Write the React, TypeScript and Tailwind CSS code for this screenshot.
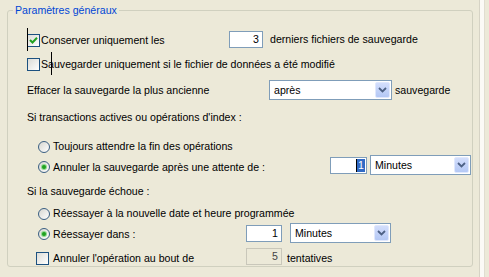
import React from 'react';

const CheckBox: React.FC<{ checked?: boolean }> = ({ checked }) => (
  <span className="flex h-[13px] w-[13px] shrink-0 items-center justify-center border border-[#1c5180] bg-gradient-to-br from-[#dcdcd7] to-white">
    {checked && (
      <svg width="9" height="9" viewBox="0 0 9 9">
        <path d="M1 4 L3.5 6.5 L8 1.8" stroke="#21a121" strokeWidth="2" fill="none" />
      </svg>
    )}
  </span>
);

const Radio: React.FC<{ checked?: boolean }> = ({ checked }) => (
  <span className="flex h-[12px] w-[12px] shrink-0 items-center justify-center rounded-full border border-[#3b5f82] bg-gradient-to-br from-[#d6d6d0] to-white">
    {checked && <span className="h-[4px] w-[4px] rounded-full bg-[#21a121] ring-1 ring-[#8fd98f]" />}
  </span>
);

const Select: React.FC<{ value: string; className: string }> = ({ value, className }) => (
  <div className={`flex h-[20px] shrink-0 items-stretch border border-[#7f9db9] bg-white ${className}`}>
    <span className="flex flex-1 items-center pl-[4px]">{value}</span>
    <span className="m-[1px] flex w-[15px] items-center justify-center rounded-[2px] border border-[#e0e8fd] bg-gradient-to-b from-[#d3defc] to-[#b4c8f5]">
      <svg width="9" height="6" viewBox="0 0 9 6">
        <path d="M1 1 L4.5 4.5 L8 1" stroke="#4d6185" strokeWidth="1.8" fill="none" />
      </svg>
    </span>
  </div>
);

export default function App() {
  return (
    <div className="flex h-[277px] w-[489px] bg-[#ece9d8] font-['Liberation_Sans',Arial,sans-serif] text-[10.6px] leading-[13px] text-black">
      <div className="relative ml-[7px] mt-[10px] h-[257px] w-[466px] shrink-0 rounded-[3px] border border-[#d0d0bf]">
        <span className="absolute left-[5px] top-[-7px] bg-[#ece9d8] px-[2px] text-[#0046d5]">Paramètres généraux</span>

        {/* traits de curseur */}
        <span className="absolute left-[19px] top-[17px] h-[23px] w-[1px] bg-black" />
        <span className="absolute left-[43px] top-[41px] h-[23px] w-[1px] bg-black" />

        <div className="flex flex-col pl-[19px] pt-[19px]">
          {/* Conserver */}
          <div className="flex h-[18px] items-center">
            <label className="mt-[2px] flex w-[202px] items-center gap-[1px]">
              <CheckBox checked />
              <span>Conserver uniquement les</span>
            </label>
            <div className="flex h-[17px] w-[34px] items-center justify-end border border-[#7f9db9] bg-white pr-[3px]">3</div>
            <span className="ml-[7px]">derniers fichiers de sauvegarde</span>
          </div>

          <div className="mt-[8px] flex h-[17px] items-center">
            <label className="flex items-center gap-[1px]">
              <CheckBox />
              <span>Sauvegarder uniquement si le fichier de données a été modifié</span>
            </label>
          </div>

          <div className="mt-[7px] flex h-[20px] items-center">
            <span className="w-[242px]">Effacer la sauvegarde la plus ancienne</span>
            <Select value="après" className="w-[123px]" />
            <span className="ml-[3px]">sauvegarde</span>
          </div>

          <div className="mt-[10px] flex h-[14px] items-center">Si transactions actives ou opérations d'index :</div>

          <div className="mt-[15px] flex h-[15px] items-center pl-[11px]">
            <label className="flex items-center gap-[3px]">
              <Radio />
              <span>Toujours attendre la fin des opérations</span>
            </label>
          </div>

          <div className="mt-[1px] flex h-[20px] items-center pl-[11px]">
            <label className="mt-[4px] flex w-[292px] items-center gap-[3px]">
              <Radio checked />
              <span>Annuler la sauvegarde après une attente de :</span>
            </label>
            <div className="flex h-[17px] w-[37px] shrink-0 items-center justify-end border border-[#7f9db9] bg-white pr-[1px]">
              <span className="border-l border-black bg-[#316ac5] px-[1px] text-white">1</span>
            </div>
            <Select value="Minutes" className="ml-[3px] w-[101px]" />
          </div>

          <div className="mt-[9px] flex h-[14px] items-center">Si la sauvegarde échoue :</div>

          <div className="mt-[8px] flex h-[15px] items-center pl-[11px]">
            <label className="flex items-center gap-[3px]">
              <Radio />
              <span>Réessayer à la nouvelle date et heure programmée</span>
            </label>
          </div>

          <div className="mt-[2px] flex h-[20px] items-center pl-[11px]">
            <label className="mt-[2px] flex w-[208px] items-center gap-[3px]">
              <Radio checked />
              <span>Réessayer dans :</span>
            </label>
            <div className="flex h-[17px] w-[36px] shrink-0 items-center justify-end border border-[#7f9db9] bg-white pr-[3px]">1</div>
            <Select value="Minutes" className="ml-[8px] w-[101px]" />
          </div>

          <div className="mt-[5px] flex h-[17px] items-center pl-[9px]">
            <label className="mt-[3px] flex w-[210px] items-center gap-[4px]">
              <CheckBox />
              <span>Annuler l'opération au bout de</span>
            </label>
            <div className="flex h-[17px] w-[36px] shrink-0 items-center justify-end border border-[#c9c7ba] bg-[#ece9d8] pr-[3px] text-[#444]">5</div>
            <span className="ml-[5px] mt-[3px]">tentatives</span>
          </div>
        </div>
      </div>

      {/* bord de l'onglet */}
      <div className="ml-[6px] flex h-full">
        <span className="w-[1px] bg-[#d6d3c5]" />
        <span className="w-[4px] bg-[#fbfaf6]" />
        <span className="w-[1px] bg-[#e0ddd0]" />
      </div>
    </div>
  );
}
